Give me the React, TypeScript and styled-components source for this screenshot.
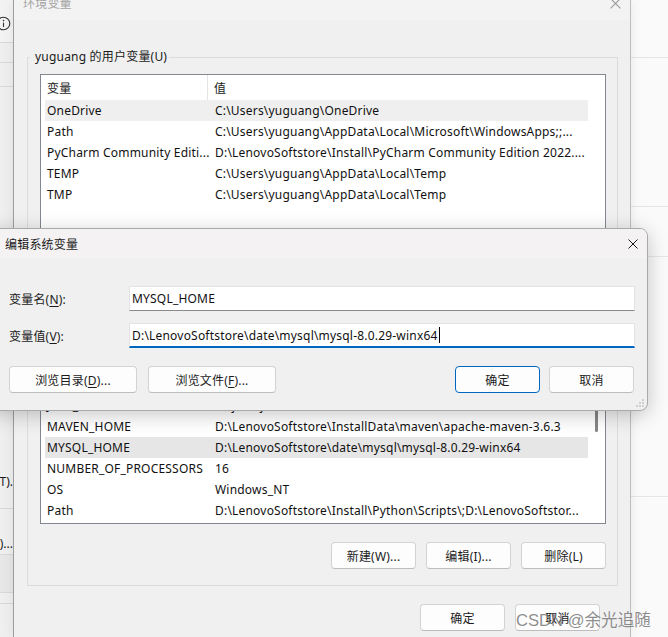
import React from "react";
import styled, { createGlobalStyle } from "styled-components";

const GlobalStyle = createGlobalStyle`
  html, body { margin: 0; padding: 0; background: #f9f9f9; overflow: hidden; }
  body {
    font-family: "Noto Sans", "Noto Sans CJK SC", sans-serif;
    font-size: 12px;
    letter-spacing: 0.2px;
    color: #000;
  }
  * { box-sizing: border-box; }
`;

const Desktop = styled.div`
  position: relative;
  width: 668px;
  height: 637px;
  overflow: hidden;
  display: flex;
  background: #f9f9f9;
`;

/* ---------- side strips (other windows behind) ---------- */
const SideStrip = styled.div`
  width: 13px;
  flex: none;
  display: flex;
  flex-direction: column;
  background: #efefef;
  overflow: hidden;
`;

const SideCell = styled.div<{ $h: number; $line?: boolean; $bg?: string }>`
  height: ${(p) => p.$h}px;
  flex: none;
  display: flex;
  align-items: center;
  justify-content: flex-end;
  border-bottom: ${(p) => (p.$line ? "1px solid #d9d9d9" : "none")};
  background: ${(p) => p.$bg ?? "transparent"};
  white-space: nowrap;
  overflow: hidden;
  color: #1a1a1a;
  letter-spacing: 0;
`;

const IconSlot = styled.div`
  height: 43px;
  flex: none;
  border-bottom: 1px solid #d9d9d9;
  background: #f3f3f3;
`;

const RightStrip = styled.div`
  flex: 1;
  display: flex;
  flex-direction: column;
  background: #fafafa;
`;

const RightCell = styled.div<{ $h: number }>`
  height: ${(p) => p.$h}px;
  flex: none;
  border-bottom: 1px solid #e6e6e6;
`;

/* ---------- main window ---------- */
const Window = styled.div`
  width: 618px;
  flex: none;
  display: flex;
  flex-direction: column;
  background: #f0f0f0;
  border-left: 1px solid #9d9d9d;
  border-right: 1px solid #bdbdbd;
  box-shadow: 0 0 12px rgba(0, 0, 0, 0.08);
  position: relative;
  z-index: 1;
`;

const WinTitleBar = styled.div`
  height: 20px;
  flex: none;
  background: #f3f3f3;
  display: flex;
  justify-content: space-between;
  align-items: flex-start;
  padding: 0 9px 0 9px;
`;

const WinTitle = styled.span`
  color: #a3a3a3;
  margin-top: -5px;
  line-height: 18px;
`;

const WinBody = styled.div`
  padding: 29px 12px 0 13px;
  display: flex;
  flex-direction: column;
`;

const Group = styled.fieldset<{ $gap?: number }>`
  margin: ${(p) => p.$gap ?? 0}px 0 0 0;
  border: 1px solid #dcdcdc;
  padding: 0 11px 16px 12px;
  min-width: 0;
  display: flex;
  flex-direction: column;
`;

const Legend = styled.legend`
  padding: 0 2px 0 5px;
  margin-left: -10px;
  line-height: 16px;
  color: #1a1a1a;
`;

const ListBox = styled.div<{ $h: number }>`
  height: ${(p) => p.$h}px;
  margin-top: 9px;
  background: #fff;
  border: 1px solid #828790;
  display: flex;
  padding-left: 4px;
  overflow: hidden;
  flex: none;
`;

const ListContent = styled.div`
  flex: 1;
  min-width: 0;
  display: flex;
  flex-direction: column;
`;

const HeaderRow = styled.div`
  display: flex;
  height: 25px;
  flex: none;
  color: #1a1a1a;
`;

const HeaderName = styled.div`
  width: 163px;
  padding-left: 2px;
  border-right: 1px solid #e5e5e5;
  display: flex;
  align-items: center;
`;

const HeaderValue = styled.div`
  padding-left: 6px;
  display: flex;
  align-items: center;
`;

const Row = styled.div<{ $sel?: string }>`
  display: grid;
  grid-template-columns: 168px 1fr;
  height: 21px;
  flex: none;
  line-height: 21px;
  background: ${(p) => p.$sel ?? "transparent"};
  color: #111;
`;

const Cell = styled.div`
  padding-left: 2px;
  white-space: nowrap;
  overflow: hidden;
`;

const Track = styled.div`
  width: 17px;
  flex: none;
  display: flex;
  justify-content: center;
`;

const Thumb = styled.div<{ $top: number; $len: number }>`
  width: 3px;
  height: ${(p) => p.$len}px;
  margin-top: ${(p) => p.$top}px;
  border-radius: 2px;
  background: #868686;
`;

const ButtonRow = styled.div<{ $mt: number; $mr?: number }>`
  display: flex;
  justify-content: flex-end;
  gap: 10px;
  margin-top: ${(p) => p.$mt}px;
  margin-right: ${(p) => p.$mr ?? 0}px;
`;

const Button = styled.button<{ $w?: number; $primary?: boolean }>`
  width: ${(p) => p.$w ?? 85}px;
  height: 27px;
  padding: 0;
  border: 1px solid ${(p) => (p.$primary ? "#0067c0" : "#d3d3d3")};
  border-bottom-color: ${(p) => (p.$primary ? "#0067c0" : "#bdbdbd")};
  border-radius: 4px;
  background: #fdfdfd;
  font-family: inherit;
  font-size: 12px;
  letter-spacing: 0.2px;
  color: #1b1b1b;
`;

const Mn = styled.span`
  text-decoration: underline;
  text-underline-offset: 2px;
`;

/* ---------- edit dialog ---------- */
const Dialog = styled.div`
  position: absolute;
  left: -10px;
  top: 228px;
  width: 658px;
  height: 183px;
  background: #f0f0f0;
  border: 1px solid #a9a9a9;
  border-radius: 8px;
  box-shadow: 0 4px 20px rgba(0, 0, 0, 0.22);
  overflow: hidden;
  z-index: 5;
  display: flex;
  flex-direction: column;
`;

const DlgTitleBar = styled.div`
  height: 30px;
  flex: none;
  background: #f4f2f2;
  display: flex;
  align-items: center;
  justify-content: space-between;
  padding: 0 9px 1px 14px;
  color: #1a1a1a;
`;

const DlgBody = styled.div`
  padding: 27px 12px 0 18px;
  display: flex;
  flex-direction: column;
`;

const FormGrid = styled.div`
  display: grid;
  grid-template-columns: 120px 1fr;
  row-gap: 12px;
  align-items: center;
`;

const Label = styled.label`
  color: #1a1a1a;
`;

const Field = styled.div<{ $focus?: boolean }>`
  height: 25px;
  background: #fff;
  border: 1px solid #e3e3e3;
  border-bottom: ${(p) => (p.$focus ? "2px solid #0067c0" : "1px solid #8a8a8a")};
  padding-left: 2px;
  display: flex;
  align-items: center;
  color: #111;
  white-space: nowrap;
`;

const Caret = styled.span`
  display: inline-block;
  width: 1px;
  height: 16px;
  background: #000;
  margin-left: 1px;
`;

const DlgButtons = styled.div`
  display: flex;
  justify-content: space-between;
  margin-top: 18px;
  margin-right: 1px;
`;

const BtnGroup = styled.div<{ $gap: number }>`
  display: flex;
  gap: ${(p) => p.$gap}px;
`;

const Grip = styled.svg`
  position: absolute;
  right: 2px;
  bottom: 2px;
`;

const Watermark = styled.div`
  position: absolute;
  left: 516px;
  top: 607px;
  font-family: "Liberation Sans", "Noto Sans CJK SC", sans-serif;
  font-size: 16.6px;
  letter-spacing: 0;
  color: rgba(110, 110, 110, 0.78);
  white-space: nowrap;
  z-index: 6;
`;

type Item = { name: string; value: string; sel?: boolean };

const userVars: Item[] = [
  { name: "OneDrive", value: "C:\\Users\\yuguang\\OneDrive", sel: true },
  { name: "Path", value: "C:\\Users\\yuguang\\AppData\\Local\\Microsoft\\WindowsApps;;..." },
  { name: "PyCharm Community Editi...", value: "D:\\LenovoSoftstore\\Install\\PyCharm Community Edition 2022...." },
  { name: "TEMP", value: "C:\\Users\\yuguang\\AppData\\Local\\Temp" },
  { name: "TMP", value: "C:\\Users\\yuguang\\AppData\\Local\\Temp" },
];

const sysVars: Item[] = [
  { name: "ComSpec", value: "C:\\Windows\\system32\\cmd.exe" },
  { name: "DriverData", value: "C:\\Windows\\System32\\Drivers\\DriverData" },
  { name: "JAVA_HOME", value: "D:\\java\\jdk-17" },
  { name: "MAVEN_HOME", value: "D:\\LenovoSoftstore\\InstallData\\maven\\apache-maven-3.6.3" },
  { name: "MYSQL_HOME", value: "D:\\LenovoSoftstore\\date\\mysql\\mysql-8.0.29-winx64", sel: true },
  { name: "NUMBER_OF_PROCESSORS", value: "16" },
  { name: "OS", value: "Windows_NT" },
  { name: "Path", value: "D:\\LenovoSoftstore\\Install\\Python\\Scripts\\;D:\\LenovoSoftstor..." },
];

const VarList: React.FC<{ items: Item[]; height: number; selColor: string; thumb?: [number, number] }> = ({
  items,
  height,
  selColor,
  thumb,
}) => (
  <ListBox $h={height}>
    <ListContent>
      <HeaderRow>
        <HeaderName>变量</HeaderName>
        <HeaderValue>值</HeaderValue>
      </HeaderRow>
      {items.map((it, i) => (
        <Row key={i} $sel={it.sel ? selColor : undefined}>
          <Cell>{it.name}</Cell>
          <Cell>{it.value}</Cell>
        </Row>
      ))}
    </ListContent>
    <Track>{thumb && <Thumb $top={thumb[0]} $len={thumb[1]} />}</Track>
  </ListBox>
);

const CloseIcon: React.FC<{ size: number; color: string; lift?: number }> = ({ size, color, lift = 0 }) => (
  <svg width={size} height={size} viewBox="0 0 10 10" style={{ marginTop: -lift }}>
    <path d="M0.5 0.5 L9.5 9.5 M9.5 0.5 L0.5 9.5" stroke={color} strokeWidth="1" fill="none" />
  </svg>
);

export default function App() {
  return (
    <>
      <GlobalStyle />
      <Desktop>
        <SideStrip>
          <IconSlot>
            <svg width="13" height="42" viewBox="0 0 13 42">
              <circle cx="3.5" cy="23.5" r="6.3" stroke="#333" strokeWidth="1.1" fill="none" />
              <circle cx="3.5" cy="20.6" r="0.8" fill="#333" />
              <path d="M3.5 22.6 V27" stroke="#333" strokeWidth="1.1" />
            </svg>
          </IconSlot>
          <SideCell $h={20} $line />
          <SideCell $h={24} $line />
          <SideCell $h={384} />
          <SideCell $h={20}>编辑(T).</SideCell>
          <SideCell $h={18} $line />
          <SideCell $h={23} />
          <SideCell $h={23} $line>浏览(O)...</SideCell>
          <SideCell $h={38} $line $bg="#e7e7e7" />
          <SideCell $h={11} $line />
          <SideCell $h={25} />
        </SideStrip>

        <Window>
          <WinTitleBar>
            <WinTitle>环境变量</WinTitle>
            <CloseIcon size={11} color="#9a9a9a" lift={2} />
          </WinTitleBar>
          <WinBody>
            <Group>
              <Legend>yuguang 的用户变量(U)</Legend>
              <VarList items={userVars} height={160} selColor="#efefef" />
              <ButtonRow $mt={18}>
                <Button>新建(N)...</Button>
                <Button>编辑(E)...</Button>
                <Button>删除(D)</Button>
              </ButtonRow>
            </Group>
            <Group $gap={6}>
              <Legend>系统变量(S)</Legend>
              <VarList items={sysVars} height={197} selColor="#e6e6e6" thumb={[67, 37]} />
              <ButtonRow $mt={18}>
                <Button>新建(W)...</Button>
                <Button>编辑(I)...</Button>
                <Button>删除(L)</Button>
              </ButtonRow>
            </Group>
            <ButtonRow $mt={18} $mr={18}>
              <Button>确定</Button>
              <Button>取消</Button>
            </ButtonRow>
          </WinBody>
        </Window>

        <RightStrip>
          <RightCell $h={58} />
          <RightCell $h={149} />
          <RightCell $h={50} />
          <RightCell $h={240} />
        </RightStrip>

        <Dialog>
          <DlgTitleBar>
            <span>编辑系统变量</span>
            <CloseIcon size={10} color="#1a1a1a" />
          </DlgTitleBar>
          <DlgBody>
            <FormGrid>
              <Label>
                变量名(<Mn>N</Mn>):
              </Label>
              <Field>MYSQL_HOME</Field>
              <Label>
                变量值(<Mn>V</Mn>):
              </Label>
              <Field $focus>
                D:\LenovoSoftstore\date\mysql\mysql-8.0.29-winx64
                <Caret />
              </Field>
            </FormGrid>
            <DlgButtons>
              <BtnGroup $gap={11}>
                <Button $w={128}>
                  浏览目录(<Mn>D</Mn>)...
                </Button>
                <Button $w={128}>
                  浏览文件(<Mn>F</Mn>)...
                </Button>
              </BtnGroup>
              <BtnGroup $gap={9}>
                <Button $primary>确定</Button>
                <Button>取消</Button>
              </BtnGroup>
            </DlgButtons>
          </DlgBody>
          <Grip width="10" height="10" viewBox="0 0 10 10">
            {[
              [8, 2],
              [5, 5],
              [8, 5],
              [2, 8],
              [5, 8],
              [8, 8],
            ].map(([x, y], i) => (
              <rect key={i} x={x - 0.75} y={y - 0.75} width="1.5" height="1.5" fill="#b5b5b5" />
            ))}
          </Grip>
        </Dialog>

        <Watermark>CSDN @余光追随</Watermark>
      </Desktop>
    </>
  );
}
